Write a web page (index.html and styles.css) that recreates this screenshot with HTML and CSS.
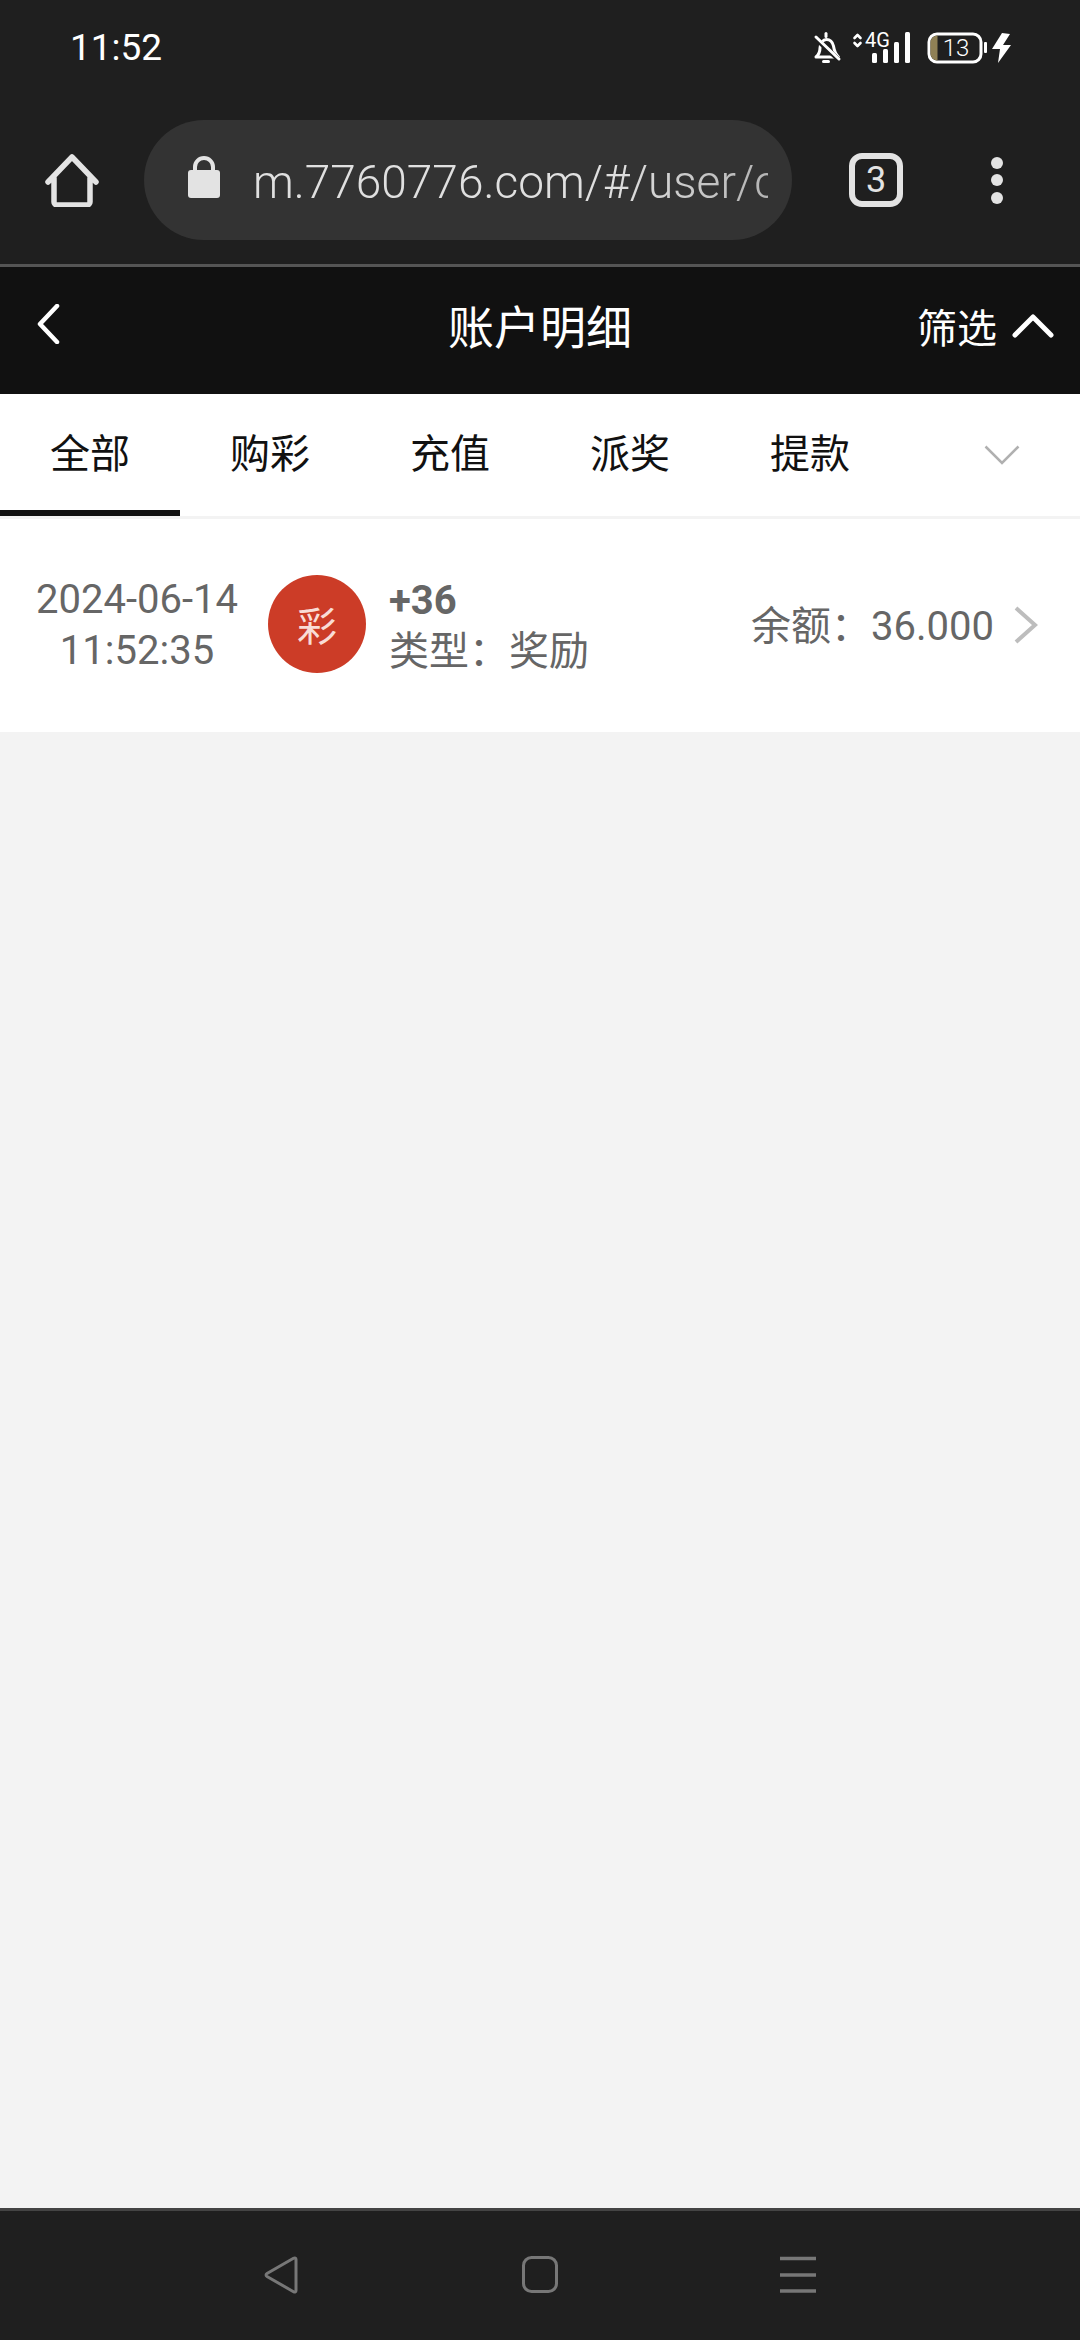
FILE: index.html
```html
<!DOCTYPE html>
<html lang="zh-CN">
<head>
<meta charset="utf-8">
<title>账户明细</title>
<link rel="stylesheet" href="styles.css">
</head>
<body>
<div class="app">
  <div class="chrome">
    <div class="status">
      <span class="time">11:52</span>
      <svg class="status-icons" width="200" height="32" viewBox="0 0 200 32">
        <g fill="none" stroke="#fff" stroke-width="3" stroke-linejoin="round" stroke-linecap="round">
          <path d="M4 25c3-2.500 4-5 4-9 0-5 3-8.500 6.500-8.500s6 2.500 7 6.500c.5 3 1 7 5 11z"/>
          <path d="M14 1.500v3"/>
          <path d="M3 6l24 22" stroke="#1f1f1f" stroke-width="5"/>
          <path d="M4 5l23 22"/>
          <path d="M11.500 29.500h5"/>
          <path d="M42.500 6l3-3 3 3M42.500 11l3 3 3-3" stroke-width="2.600"/>
        </g>
        <text class="net" x="53" y="15">4G</text>
        <g fill="#fff">
          <rect x="60" y="21" width="5" height="10" rx="1.500"/>
          <rect x="71" y="17" width="5" height="14" rx="1.500"/>
          <rect x="82" y="10" width="5" height="21" rx="1.500"/>
          <rect x="93" y="0" width="5" height="31" rx="1.500"/>
          <rect x="172" y="10" width="3" height="11" rx="1"/>
          <path d="M190 1L180 17h8l-2 14 13-18h-8l7-11z"/>
        </g>
        <rect x="117" y="2" width="52" height="28" rx="8" fill="#1f1f1f" stroke="#fff" stroke-width="3"/>
        <path d="M118.500 10.500a7 7 0 0 1 7-7h0v25h0a7 7 0 0 1-7-7z" fill="#8f8055"/>
        <text class="batt" x="144" y="24">13</text>
      </svg>
    </div>
    <div class="browser">
      <svg class="home" width="54" height="54" viewBox="0 0 54 54">
        <path d="M3 29L27 4l24 25M9 25v24a3 3 0 0 0 3 3h30a3 3 0 0 0 3-3V25" fill="none" stroke="#e3e3e3" stroke-width="5.500" stroke-linecap="round" stroke-linejoin="round"/>
      </svg>
      <div class="url">
        <svg class="lock" width="32" height="42" viewBox="0 0 32 42">
          <path d="M7 16V11a9 9 0 0 1 18 0v5" fill="none" stroke="#e3e3e3" stroke-width="4"/>
          <rect y="14" width="32" height="28" rx="3" fill="#e3e3e3"/>
        </svg>
        <span class="url-text">m.7760776.com/#/user/c</span>
      </div>
      <div class="tabs-count">3</div>
      <div class="dots"><i></i><i></i><i></i></div>
    </div>
  </div>
  <header class="head">
    <svg class="back" width="24" height="40" viewBox="0 0 24 40">
      <path d="M21 2L4 20l17 18" fill="none" stroke="#fff" stroke-width="4.500" stroke-linecap="round" stroke-linejoin="round"/>
    </svg>
    <h1 class="title">账户明细</h1>
    <div class="filter">
      <span>筛选</span>
      <svg width="42" height="24" viewBox="0 0 42 24">
        <path d="M3 21L21 3l18 18" fill="none" stroke="#fff" stroke-width="5" stroke-linecap="round" stroke-linejoin="round"/>
      </svg>
    </div>
  </header>
  <nav class="tabs">
    <div class="tab active">全部</div>
    <div class="tab">购彩</div>
    <div class="tab">充值</div>
    <div class="tab">派奖</div>
    <div class="tab">提款</div>
    <div class="more">
      <svg width="36" height="20" viewBox="0 0 36 20">
        <path d="M1.500 1.500L18 18 34.500 1.500" fill="none" stroke="#b0b0b0" stroke-width="2.500"/>
      </svg>
    </div>
  </nav>
  <main class="content">
    <section class="row">
      <div class="date">2024-06-14<br>11:52:35</div>
      <div class="badge">彩</div>
      <div class="info">
        <div class="amount">+36</div>
        <div class="kind">类型<span class="colon">：</span>奖励</div>
      </div>
      <div class="balance">余额<span class="colon">：</span>36.000</div>
      <svg class="go" width="24" height="38" viewBox="0 0 24 38">
        <path d="M2 2l19 17L2 36" fill="none" stroke="#bdbdbd" stroke-width="4"/>
      </svg>
    </section>
  </main>
  <footer class="nav">
    <svg width="38" height="38" viewBox="0 0 38 38">
      <path d="M33 3.500v31c0 1.500-1 2-2.500 1.200L4 20.500c-1.300-.8-1.300-2.200 0-3L30.500 2.300C32 1.500 33 2 33 3.500z" fill="none" stroke="#777" stroke-width="3"/>
    </svg>
    <svg width="38" height="38" viewBox="0 0 38 38">
      <rect x="2.500" y="1.500" width="33" height="34" rx="8" fill="none" stroke="#777" stroke-width="3"/>
    </svg>
    <svg width="38" height="38" viewBox="0 0 38 38">
      <path d="M1 2.500h36M1 19h36M1 35h36" fill="none" stroke="#777" stroke-width="3.500"/>
    </svg>
  </footer>
</div>
</body>
</html>
```
FILE: styles.css
```css
* { box-sizing: border-box; }
html, body { margin: 0; padding: 0; }
body { font-family: Roboto, "Noto Sans CJK SC", sans-serif; background: #f3f3f3; }
.app { width: 1080px; height: 2340px; display: flex; flex-direction: column; overflow: hidden; }

.chrome { background: #1f1f1f; height: 267px; border-bottom: 3px solid #555; flex: none; }
.status { height: 96px; display: flex; align-items: flex-start; justify-content: space-between; padding: 26px 0 0 70px; }
.time { color: #fff; font-size: 37px; line-height: 44px; font-weight: 400; }
.status-icons { margin: 6px 68px 0 0; display: block; overflow: visible; }
.net { fill: #fff; font-size: 20px; font-family: Roboto, sans-serif; }
.batt { fill: #fff; font-size: 24px; font-weight: 300; text-anchor: middle; font-family: Roboto, sans-serif; }

.browser { height: 168px; display: flex; align-items: center; padding-left: 45px; }
.home { flex: none; display: block; }
.url { width: 648px; height: 120px; margin-left: 45px; padding: 0 24px 0 44px; background: #333; border-radius: 60px; display: flex; align-items: center; flex: none; }
.lock { flex: none; margin-top: -6px; }
.url-text { margin-left: 33px; margin-top: 3px; color: #e0e0e0; font-size: 46px; font-weight: 300; white-space: nowrap; overflow: hidden; flex: 1; line-height: 60px; -webkit-mask-image: linear-gradient(90deg, #000 70%, rgba(0,0,0,.75) 100%); mask-image: linear-gradient(90deg, #000 70%, rgba(0,0,0,.75) 100%); }
.tabs-count { width: 54px; height: 54px; margin-left: 57px; border: 6px solid #e3e3e3; border-radius: 13px; color: #e3e3e3; font-size: 36px; font-weight: 400; display: flex; align-items: center; justify-content: center; flex: none; }
.dots { margin-left: 88px; display: flex; flex-direction: column; gap: 5.500px; }
.dots i { display: block; width: 12px; height: 12px; border-radius: 50%; background: #e3e3e3; }

.head { height: 127px; background: #111; display: grid; grid-template-columns: 1fr auto 1fr; align-items: center; padding: 0 26px 0 36px; flex: none; }
.back { display: block; margin-top: -14px; }
.title { margin: -5px 10px 0 0; color: #fff; font-size: 46px; font-weight: 400; line-height: 60px; }
.filter { justify-self: end; display: flex; align-items: center; gap: 15px; color: #fff; font-size: 40px; }
.filter span { margin-top: -9px; }
.filter svg { display: block; margin-top: -10px; }

.tabs { height: 125px; background: #fff; border-bottom: 3px solid #f3f3f3; display: flex; flex: none; }
.tab { width: 180px; height: 122px; padding-top: 36px; text-align: center; color: #111; font-size: 40px; line-height: 50px; border-bottom: 6px solid transparent; }
.tab.active { border-bottom-color: #111; }
.more { flex: 1; display: flex; justify-content: center; padding: 51px 0 0 24px; }
.more svg { display: block; }

.content { flex: 1; background: #f3f3f3; }
.row { height: 213px; background: #fff; display: flex; align-items: center; padding-bottom: 2px; color: #666; }
.date { width: 206px; margin-left: 34px; text-align: center; font-size: 40px; line-height: 51px; white-space: nowrap; }
.badge { width: 98px; height: 98px; margin: -1px 0 0 28px; border-radius: 50%; background: #cc3c27; color: #f9dcd6; font-size: 40px; display: flex; align-items: center; justify-content: center; flex: none; }
.info { margin: 2px 0 0 23px; }
.amount { font-size: 40px; font-weight: 700; line-height: 51px; }
.kind { margin-top: -3px; font-size: 40px; line-height: 51px; }
.colon { font-family: "Noto Sans CJK TC", sans-serif; }
.balance { margin-left: auto; font-size: 40px; line-height: 51px; }
.go { margin: 0 42px 0 20px; display: block; flex: none; }

.nav { height: 132px; background: #1f1f1f; border-top: 3px solid #444; display: flex; align-items: flex-start; justify-content: center; gap: 220px; padding-top: 45px; flex: none; }
.nav svg { display: block; }
```
